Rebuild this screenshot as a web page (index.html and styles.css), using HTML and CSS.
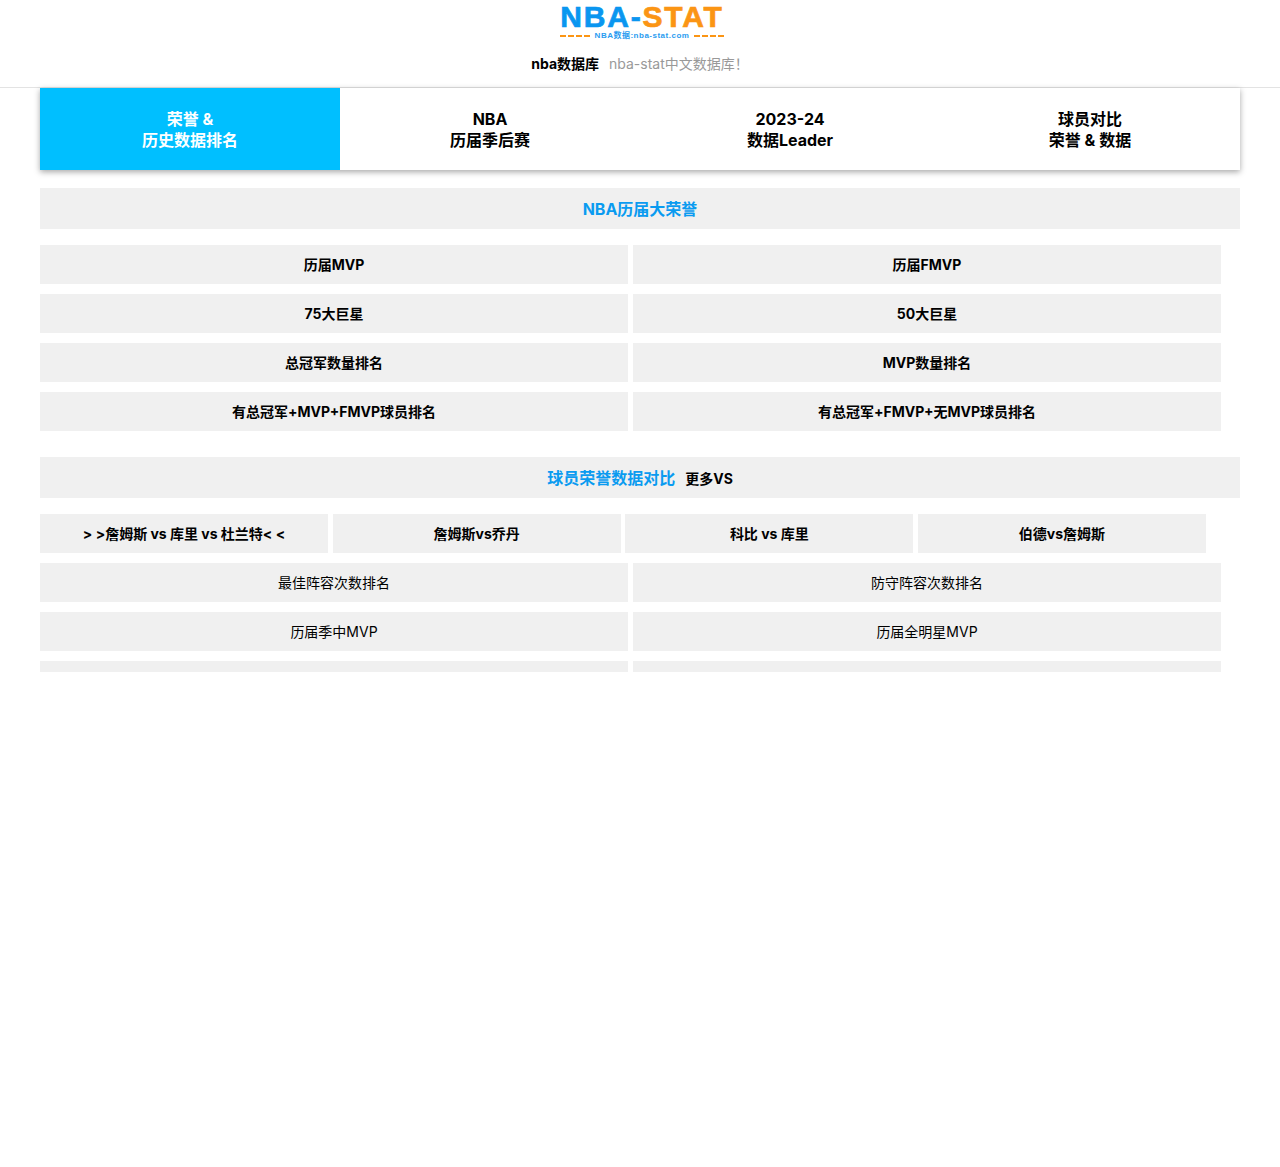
FILE: index.html
```html
<!DOCTYPE html>
<html lang="zh-CN">
<head>
    <meta charset="UTF-8">
    <meta name="viewport" content="width=device-width, initial-scale=1.0">
    <title>NBA数据库 - nba-stat</title>
    <link rel="stylesheet" href="styles.css">
</head>
<body>
    <header class="site-header">
        <a class="logo" href="#">
            <span class="logo-title"><span class="logo-blue">NBA-</span><span class="logo-orange">STAT</span></span>
            <span class="logo-sub">
                <span class="logo-dash"></span>
                <span class="logo-url">NBA数据:nba-stat.com</span>
                <span class="logo-dash"></span>
            </span>
        </a>
        <p class="tagline"><strong>nba数据库</strong><span>nba-stat中文数据库<span class="bang">！</span></span></p>
    </header>

    <main class="page">
        <nav class="tabs">
            <a class="tab active" href="#">荣誉 &amp;<br>历史数据排名</a>
            <a class="tab" href="#">NBA<br>历届季后赛</a>
            <a class="tab" href="#">2023-24<br>数据Leader</a>
            <a class="tab" href="#">球员对比<br>荣誉 &amp; 数据</a>
        </nav>

        <div class="panel">
            <h2 class="section-title">NBA历届大荣誉</h2>
            <div class="grid-two bold">
                <a class="cell" href="#">历届MVP</a>
                <a class="cell" href="#">历届FMVP</a>
                <a class="cell" href="#">75大巨星</a>
                <a class="cell" href="#">50大巨星</a>
                <a class="cell" href="#">总冠军数量排名</a>
                <a class="cell" href="#">MVP数量排名</a>
                <a class="cell" href="#">有总冠军+MVP+FMVP球员排名</a>
                <a class="cell" href="#">有总冠军+FMVP+无MVP球员排名</a>
            </div>

            <h2 class="section-title second">球员荣誉数据对比<a class="more" href="#">更多VS</a></h2>
            <div class="grid-four bold">
                <a class="cell" href="#">&gt; &gt;詹姆斯 vs 库里 vs 杜兰特&lt; &lt;</a>
                <a class="cell" href="#">詹姆斯vs乔丹</a>
                <a class="cell" href="#">科比 vs 库里</a>
                <a class="cell" href="#">伯德vs詹姆斯</a>
            </div>
            <div class="grid-two">
                <a class="cell" href="#">最佳阵容次数排名</a>
                <a class="cell" href="#">防守阵容次数排名</a>
                <a class="cell" href="#">历届季中MVP</a>
                <a class="cell" href="#">历届全明星MVP</a>
                <a class="cell" href="#"></a>
                <a class="cell" href="#"></a>
            </div>
        </div>
    </main>
</body>
</html>
```

FILE: styles.css
```css
* { box-sizing: border-box; }

body { margin: 0; min-height: 1167px; background: #fff; color: #000; font-family: Inter, "Noto Sans CJK SC", sans-serif; font-size: 14px; }
a { color: inherit; text-decoration: none; }

/* Header */
.site-header { height: 88px; border-bottom: 1px solid #e3e3e3; text-align: center; }
.logo { display: flex; flex-direction: column; align-items: center; width: 164px; margin: 0 auto; padding-top: 3px; position: relative; left: 2px; }
.logo-title { font-family: "Liberation Sans", sans-serif; font-size: 30px; line-height: 28px; font-weight: bold; letter-spacing: 1.8px; white-space: nowrap; -webkit-text-stroke: 0.7px currentColor; }
.logo-blue { color: #0a96f0; }
.logo-orange { color: #fb9514; }
.logo-sub { display: flex; align-items: center; justify-content: space-between; width: 164px; height: 9px; margin-top: 0; }
.logo-dash { width: 30px; border-top: 2px dashed #fb9514; }
.logo-url { color: #2a9cf0; font-family: "Liberation Sans", "Noto Sans CJK SC", sans-serif; font-size: 8px; font-weight: bold; line-height: 9px; letter-spacing: 0.5px; white-space: nowrap; }
.tagline { margin: 13px 0 0; line-height: 20px; color: #999; }
.tagline strong { color: #000; margin-right: 10px; }
.bang { font-family: "Noto Sans CJK TC", sans-serif; }

/* Tabs */
.page { width: 1200px; margin: 0 auto; }
.tabs { display: flex; height: 82px; box-shadow: 0 2px 6px rgba(0, 0, 0, 0.35); }
.tab { flex: 1; padding-top: 21px; text-align: center; font-size: 16px; font-weight: bold; line-height: 21px; }
.tab.active { background: #00bfff; color: #fff; }

/* Sections */
.panel { height: 502px; overflow: hidden; }
.section-title { height: 41px; margin: 18px 0 16px; background: #f0f0f0; color: #0a9bf0; font-size: 16px; font-weight: bold; line-height: 43px; text-align: center; }
.section-title.second { margin-top: 26px; }
.more { margin-left: 10px; color: #000; font-size: 14px; }

.grid-two, .grid-four { display: grid; gap: 10px 5px; margin-bottom: 10px; }
.grid-two { grid-template-columns: repeat(2, 588px); }
.grid-four { grid-template-columns: repeat(4, 288px); column-gap: 4.67px; }
.cell { height: 39px; background: #f0f0f0; line-height: 40px; text-align: center; white-space: nowrap; }
.bold .cell { font-weight: bold; }
```
